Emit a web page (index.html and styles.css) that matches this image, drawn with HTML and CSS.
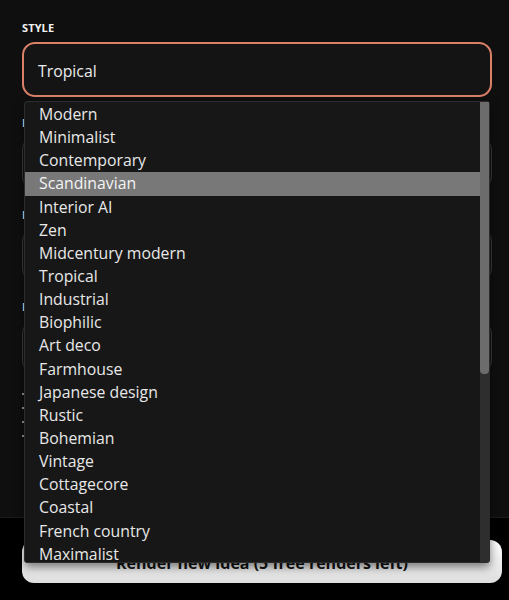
FILE: index.html
```html
<!DOCTYPE html>
<html>
<head>
<meta charset="utf-8">
<link rel="stylesheet" href="styles.css">
</head>
<body>
<div class="page">
  <section class="form">
    <div class="field">
      <div class="label">STYLE</div>
      <div class="select-box">Tropical</div>
    </div>
    <div class="field under">
      <div class="label">ROOM</div>
      <div class="input-box"></div>
    </div>
    <div class="field under">
      <div class="label">MODE</div>
      <div class="input-box"></div>
    </div>
    <div class="field under">
      <div class="label">RENDERS</div>
      <div class="input-box"></div>
    </div>
    <div class="notes under">
      <div class="note"></div>
      <div class="note"></div>
      <div class="note"></div>
      <div class="note"></div>
    </div>
  </section>
  <footer class="actions">
    <button class="render-btn">Render new idea (5 free renders left)</button>
  </footer>

  <div class="dropdown">
    <ul class="options">
      <li>Modern</li>
      <li>Minimalist</li>
      <li>Contemporary</li>
      <li class="hover">Scandinavian</li>
      <li>Interior AI</li>
      <li>Zen</li>
      <li>Midcentury modern</li>
      <li>Tropical</li>
      <li>Industrial</li>
      <li>Biophilic</li>
      <li>Art deco</li>
      <li>Farmhouse</li>
      <li>Japanese design</li>
      <li>Rustic</li>
      <li>Bohemian</li>
      <li>Vintage</li>
      <li>Cottagecore</li>
      <li>Coastal</li>
      <li>French country</li>
      <li>Maximalist</li>
    </ul>
    <div class="scrollbar"><div class="thumb"></div></div>
  </div>
</div>
</body>
</html>
```

FILE: styles.css
```css
* { box-sizing: border-box; }
html, body {
  margin: 0;
  padding: 0;
  background: #000;
  font-family: "Open Sans", "Noto Sans", sans-serif;
}
.page {
  position: relative;
  width: 509px;
  height: 600px;
  overflow: hidden;
}
.form {
  background: #0f0f0f;
  height: 518px;
  padding: 20px 17px 0 22px;
  display: flex;
  flex-direction: column;
  gap: 14px;
  border-bottom: 1px solid #1c1c1c;
}
.field {
  display: flex;
  flex-direction: column;
  gap: 7px;
}
.label {
  color: #f2f2f2;
  font-size: 11px;
  font-weight: 700;
  letter-spacing: 0.1px;
  line-height: 15px;
}
.select-box {
  height: 55px;
  border: 2px solid #d98068;
  border-radius: 13px;
  background: #141414;
  color: #ececec;
  font-size: 15.8px;
  padding: 2px 14px 0;
  display: flex;
  align-items: center;
}
.input-box {
  height: 52px;
  border: 1px solid #3a3a3a;
  border-radius: 12px;
  background: #141414;
}
.field.under { margin-top: 4px; }
.notes {
  display: flex;
  flex-direction: column;
  gap: 12px;
  padding-top: 6px;
}
.note {
  width: 6px;
  height: 2px;
  background: #9a9a9a;
}
.actions {
  display: flex;
  padding: 22px 7px 0 22px;
}
.render-btn {
  width: 480px;
  height: 43px;
  border: none;
  border-radius: 12px;
  background: linear-gradient(#ffffff, #dedede);
  color: #111;
  font-family: "Open Sans", "Noto Sans", sans-serif;
  font-weight: 700;
  font-size: 16px;
  padding-top: 4px;
}
.dropdown {
  position: absolute;
  left: 24px;
  top: 101px;
  width: 466px;
  height: 462px;
  background: #171717;
  border: 1px solid #2c2c2c;
  border-radius: 3px;
  box-shadow: 0 4px 10px rgba(0,0,0,0.5);
  display: flex;
}
.options {
  list-style: none;
  margin: 1px 0 0 0;
  padding: 0;
  flex: 1;
}
.options li {
  height: 23.15px;
  line-height: 23.15px;
  padding-left: 14px;
  color: #e8e8e8;
  font-size: 15.8px;
  white-space: nowrap;
}
.options li.hover {
  background: #787878;
  color: #f4f4f4;
}
.scrollbar {
  width: 9px;
  background: #2e2e2e;
  display: flex;
  flex-direction: column;
}
.thumb {
  height: 272px;
  background: #6c6c6c;
  border-radius: 0 0 4px 4px;
}
```
